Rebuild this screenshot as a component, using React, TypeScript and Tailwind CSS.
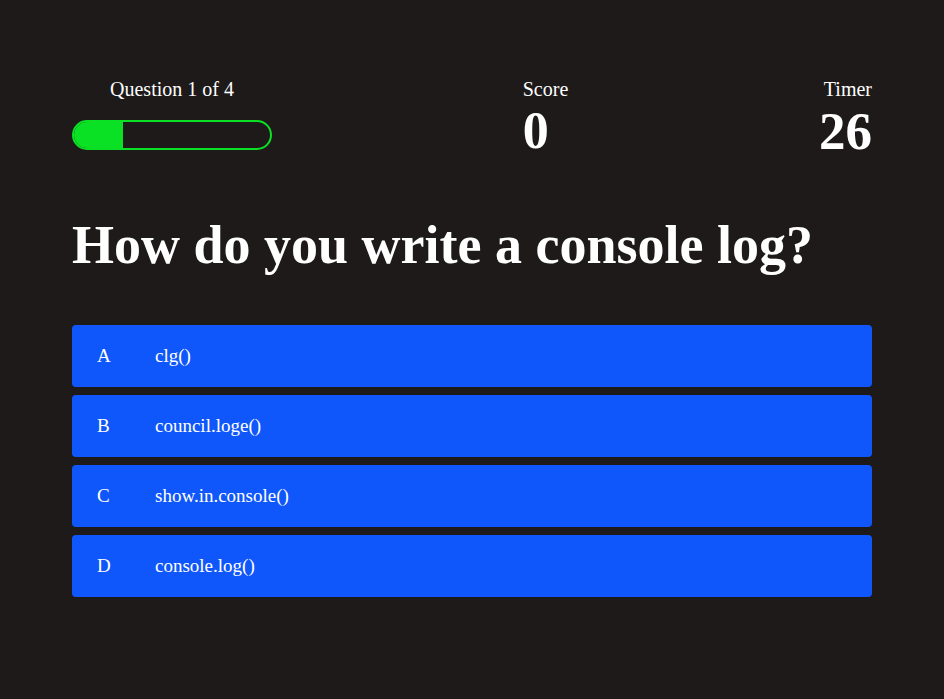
import { useState } from 'react';

const questions = [
    {
        question: 'How do you write a console log?',
        answers: ['clg()', 'council.loge()', 'show.in.console()', 'console.log()'],
    },
];

export default function App() {
    const [current] = useState(0);
    const [score] = useState(0);
    const [timer] = useState(26);
    const total = 4;
    const q = questions[current];
    const letters = ['A', 'B', 'C', 'D'];

    return (
        <main className="min-h-screen bg-[#1e1a19] text-white font-['Liberation_Serif','Times_New_Roman',serif]">
            <div className="px-[72px] pt-[75px]">
                <div className="flex justify-between items-start">
                    <div className="w-[200px] flex flex-col items-center">
                        <div className="text-[20px] leading-7">Question {current + 1} of {total}</div>
                        <div className="mt-[17px] w-full h-[30px] rounded-full border-2 border-[#0ae024] overflow-hidden">
                            <div className="h-full bg-[#0ae024]" style={{ width: `${((current + 1) / total) * 100}%` }}></div>
                        </div>
                    </div>
                    <div className="flex flex-col items-start">
                        <div className="text-[20px] leading-7">Score</div>
                        <div className="mt-[2px] text-[52px] leading-none font-bold">{score}</div>
                    </div>
                    <div className="flex flex-col items-end">
                        <div className="text-[20px] leading-7">Timer</div>
                        <div className="mt-[2px] text-[53px] leading-none font-bold">{timer}</div>
                    </div>
                </div>

                <h1 className="mt-[60px] text-[54px] leading-none font-bold">{q.question}</h1>

                <div className="mt-[53px] flex flex-col gap-2">
                    {q.answers.map((answer, index) => (
                        <button
                            key={index}
                            className="h-[62px] w-full rounded bg-[#1057fb] flex items-center pl-[25px] pr-6 text-left text-[19px]"
                        >
                            <span className="w-[58px]">{letters[index]}</span>
                            <span>{answer}</span>
                        </button>
                    ))}
                </div>
            </div>
        </main>
    );
}
